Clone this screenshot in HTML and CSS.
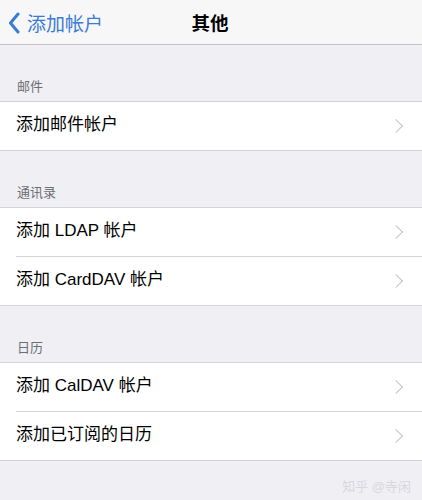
FILE: index.html
```html
<!DOCTYPE html>
<html lang="zh-CN">
<head>
  <meta charset="UTF-8">
  <meta name="viewport" content="width=device-width, initial-scale=1.0">
  <title>其他</title>
  <link rel="stylesheet" href="styles.css">
</head>
<body>
  <div class="navbar">
    <a class="back" href="#">
      <svg class="back-icon" width="12" height="22" viewBox="0 0 12 22">
        <path d="M10 2 L2.5 11 L10 20" fill="none" stroke="currentColor" stroke-width="3" stroke-linecap="round" stroke-linejoin="round"/>
      </svg>
      <span>添加帐户</span>
    </a>
    <div class="title">其他</div>
  </div>

  <div class="group-header">邮件</div>
  <div class="group">
    <div class="row"><span>添加邮件帐户</span><i class="chevron"></i></div>
  </div>

  <div class="group-header">通讯录</div>
  <div class="group">
    <div class="row"><span>添加 LDAP 帐户</span><i class="chevron"></i></div>
    <div class="row"><span>添加 CardDAV 帐户</span><i class="chevron"></i></div>
  </div>

  <div class="group-header">日历</div>
  <div class="group">
    <div class="row"><span>添加 CalDAV 帐户</span><i class="chevron"></i></div>
    <div class="row"><span>添加已订阅的日历</span><i class="chevron"></i></div>
  </div>

  <div class="footer">知乎 @寺闲</div>
</body>
</html>
```

FILE: styles.css
```css
body {
  margin: 0;
  background: #efeff4;
  font-family: "Liberation Sans", "Noto Sans CJK SC", sans-serif;
  color: #000;
  height: 500px;
  overflow: hidden;
}
.navbar {
  height: 44px;
  background: #f7f7f8;
  border-bottom: 1px solid #c4c4c8;
  display: flex;
  align-items: center;
  justify-content: center;
  position: relative;
}
.back {
  position: absolute;
  left: 8px;
  top: 0;
  height: 44px;
  display: flex;
  align-items: center;
  gap: 7px;
  color: #3b7bd6;
  text-decoration: none;
  font-size: 19px;
}
.back-icon {
  margin-top: 1px;
}
.title {
  font-size: 18.5px;
  font-weight: bold;
  margin-left: -2px;
}
.group-header {
  height: 56px;
  box-sizing: border-box;
  display: flex;
  align-items: flex-end;
  padding: 0 17px 6px;
  font-size: 13px;
  line-height: 16px;
  color: #6d6d72;
}
.group {
  background: #fff;
  border-top: 1px solid #d4d4d8;
  border-bottom: 1px solid #d4d4d8;
}
.row {
  height: 48px;
  display: flex;
  align-items: center;
  justify-content: space-between;
  margin-left: 16px;
  padding-right: 21px;
  font-size: 17px;
  line-height: 20px;
}
.row span {
  margin-top: -2px;
}
.row + .row {
  border-top: 1px solid #d4d4d8;
}
.chevron {
  width: 9px;
  height: 9px;
  border-top: 1.5px solid #c4c4c8;
  border-right: 1.5px solid #c4c4c8;
  transform: rotate(45deg);
}
.footer {
  text-align: right;
  padding: 15px 11px 0;
  font-size: 13px;
  color: #d8d8dc;
}
```
